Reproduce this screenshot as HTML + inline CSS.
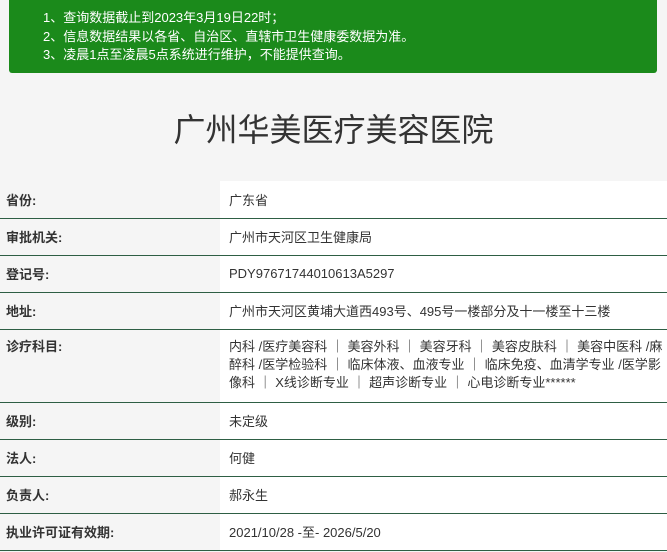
<!DOCTYPE html>
<html><head><meta charset="utf-8"><style>
*{margin:0;padding:0;box-sizing:border-box}
body{width:667px;height:552px;background:#f5f5f5;font-family:"Liberation Sans","Noto Sans CJK SC",sans-serif;overflow:hidden;position:relative;color:#333}
.notice{position:absolute;left:9px;top:0;width:648px;height:73px;background:#1b8a1b;border-radius:0 0 3px 3px;color:#fff;font-size:13px;line-height:18.5px;padding:9px 0 0 34px}
h1{position:absolute;top:108px;left:0;width:667px;text-align:center;font-size:32px;font-weight:normal;color:#333;line-height:44px}
table{position:absolute;top:181px;left:0;width:667px;border-collapse:collapse;font-size:13px}
td{border-bottom:1.5px solid #2e5e44;height:37px;vertical-align:middle}
td.l{width:220px;padding-left:6px;font-weight:bold;background:#f5f5f5}
td.v{background:#fff;padding-left:9px;padding-right:0}
tr.big td{height:73px;vertical-align:top;padding-top:8px;line-height:18px}
tr.big td.v{white-space:nowrap}
</style></head><body>
<div class="notice">1、查询数据截止到2023年3月19日22时；<br>2、信息数据结果以各省、自治区、直辖市卫生健康委数据为准。<br>3、凌晨1点至凌晨5点系统进行维护，不能提供查询。</div>
<h1>广州华美医疗美容医院</h1>
<table>
<tr><td class="l">省份:</td><td class="v">广东省</td></tr>
<tr><td class="l">审批机关:</td><td class="v">广州市天河区卫生健康局</td></tr>
<tr><td class="l">登记号:</td><td class="v">PDY97671744010613A5297</td></tr>
<tr><td class="l">地址:</td><td class="v">广州市天河区黄埔大道西493号、495号一楼部分及十一楼至十三楼</td></tr>
<tr class="big"><td class="l">诊疗科目:</td><td class="v">内科 /医疗美容科 ｜ 美容外科 ｜ 美容牙科 ｜ 美容皮肤科 ｜ 美容中医科 /麻<br>醉科 /医学检验科 ｜ 临床体液、血液专业 ｜ 临床免疫、血清学专业 /医学影<br>像科 ｜ X线诊断专业 ｜ 超声诊断专业 ｜ 心电诊断专业******</td></tr>
<tr><td class="l">级别:</td><td class="v">未定级</td></tr>
<tr><td class="l">法人:</td><td class="v">何健</td></tr>
<tr><td class="l">负责人:</td><td class="v">郝永生</td></tr>
<tr><td class="l">执业许可证有效期:</td><td class="v">2021/10/28 -至- 2026/5/20</td></tr>
</table>
</body></html>
